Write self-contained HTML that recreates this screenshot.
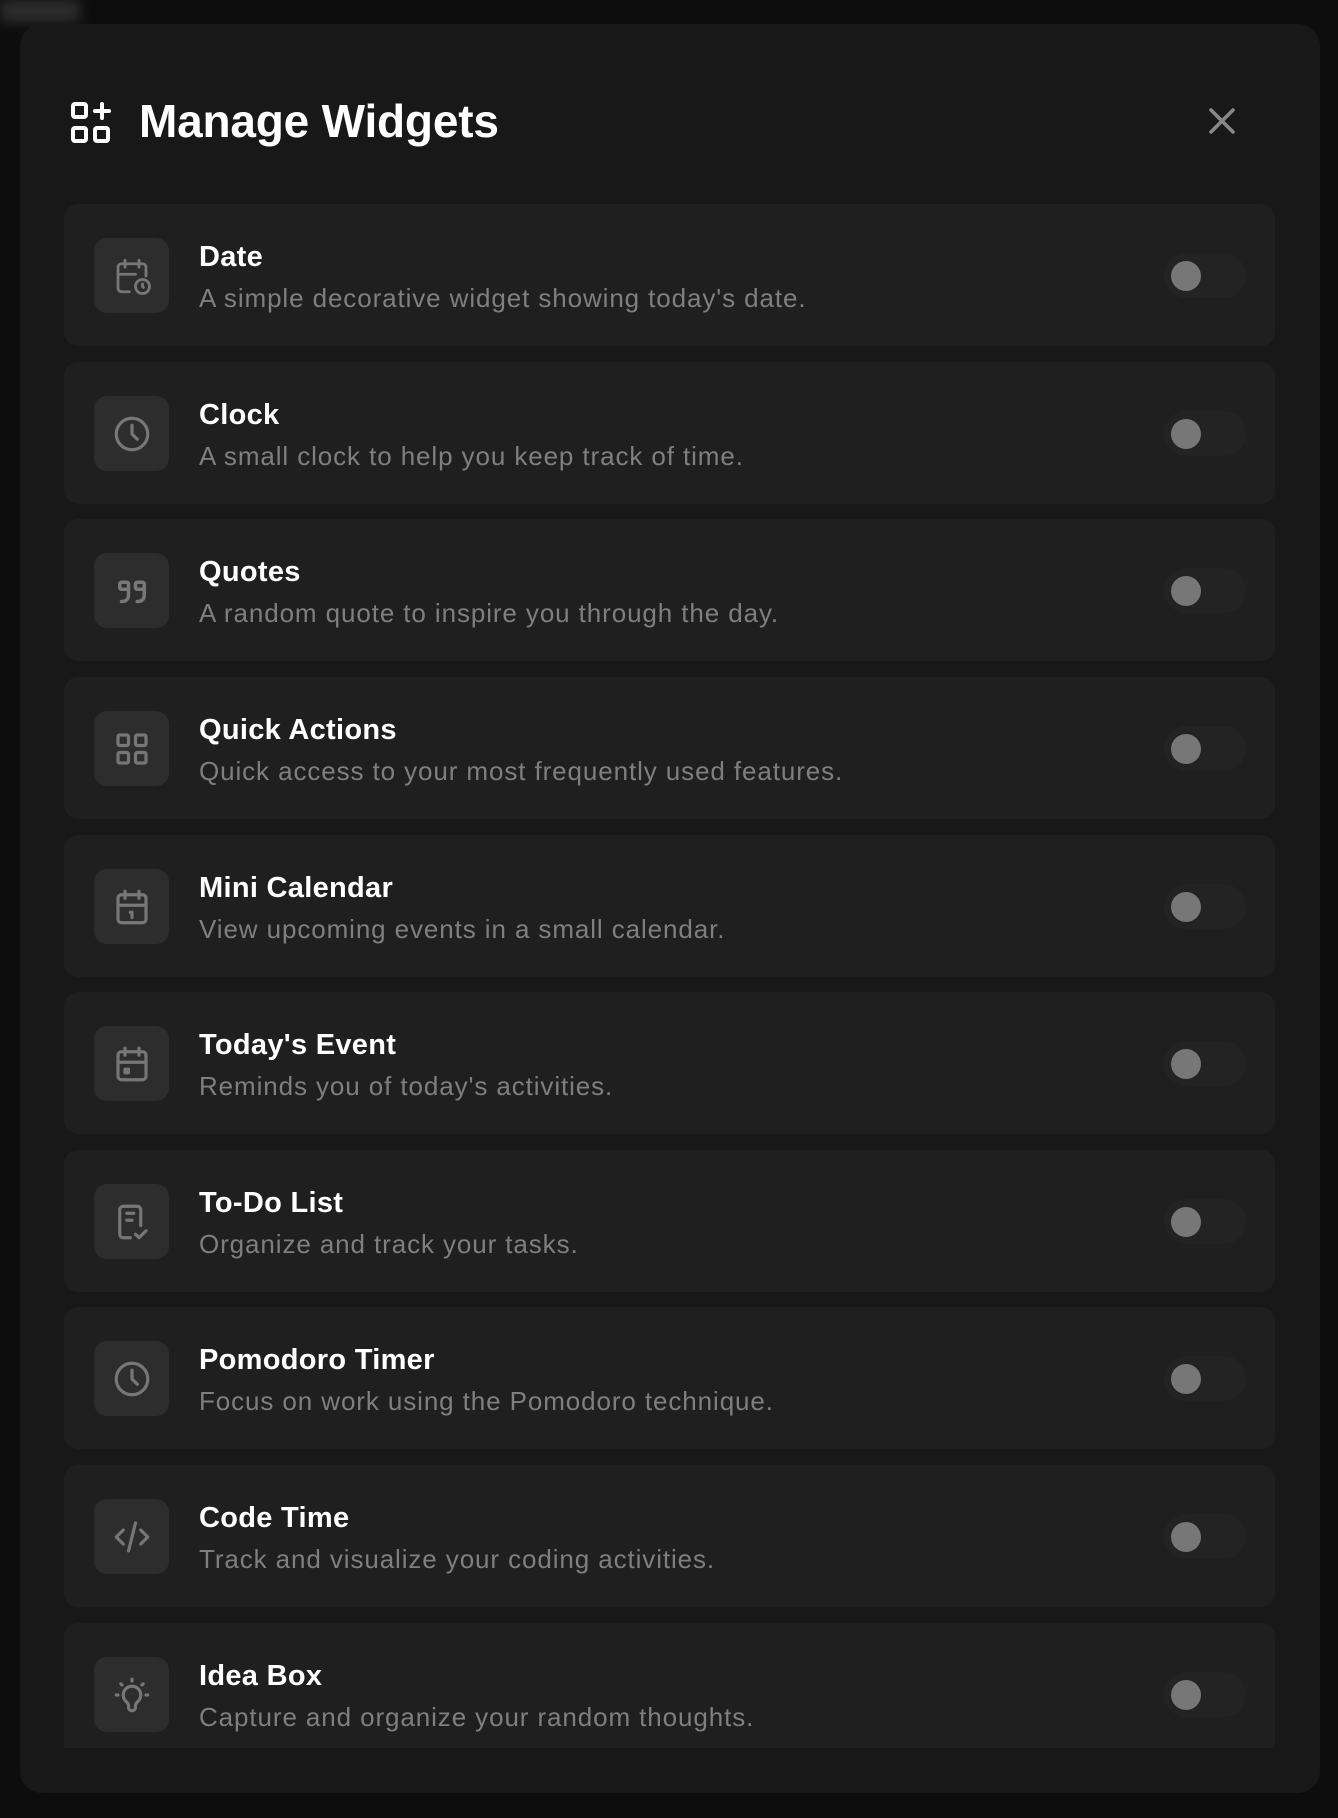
<!DOCTYPE html>
<html><head><meta charset="utf-8"><style>
*{margin:0;padding:0;box-sizing:border-box}
html,body{width:1338px;height:1818px;overflow:hidden;background:#0d0d0d;font-family:"Liberation Sans",sans-serif}
.blur1{position:absolute;left:0;top:0;width:80px;height:22px;background:#3a3a3a;filter:blur(6px);opacity:.7}
.modal{position:absolute;left:20px;top:24px;width:1300px;height:1769px;background:#181818;border-radius:22px;overflow:hidden}
.hicon{position:absolute;left:0;top:0}
.title{position:absolute;left:139px;top:94px;font-size:46px;font-weight:700;color:#fff;letter-spacing:-0.2px;line-height:54px;left:119px;top:70px}
.close{position:absolute;left:1178px;top:73px}
.list{position:absolute;left:44px;top:180px;width:1211px;height:1544px;overflow:hidden}
.row{position:absolute;left:0;width:1211px;height:142px;background:#1f1f1f;border-radius:14px}
.ib{position:absolute;left:30px;top:34px;width:75px;height:75px;background:#2d2d2d;border-radius:13px;display:flex;align-items:center;justify-content:center}
.ib svg{width:42px;height:42px}
.t{position:absolute;left:135px;top:37px;font-size:29px;font-weight:700;color:#fff;letter-spacing:0.3px}
.d{position:absolute;left:135px;top:79px;font-size:26px;color:#7f7f7f;letter-spacing:0.9px}
.tg{position:absolute;left:1100px;top:49px;width:82px;height:45px;border-radius:23px;background:#232323}
.tg::after{content:"";position:absolute;left:7px;top:8px;width:30px;height:30px;border-radius:50%;background:#777}
</style></head><body>
<div class="blur1"></div>
<div class="modal">
<svg class="hicon" width="120" height="160" viewBox="0 0 120 160" fill="none" stroke="#fff" stroke-width="4" stroke-linecap="round" stroke-linejoin="round"><rect x="53" y="80" width="13" height="13" rx="2"/><rect x="53" y="104" width="13" height="13" rx="2"/><rect x="75" y="104" width="13" height="13" rx="2"/><path d="M75 87h14M82 80v14"/></svg>
<div class="title">Manage Widgets</div>
<svg class="close" width="48" height="48" viewBox="0 0 24 24" fill="none" stroke="#888" stroke-width="1.8" stroke-linecap="round"><path d="M6.5 6.5l11 11M17.5 6.5l-11 11"/></svg>
<div class="list">
<div class="row" style="top:0"><div class="ib"><svg viewBox="0 0 24 24" fill="none" stroke="#777" stroke-width="1.6" stroke-linecap="round" stroke-linejoin="round"><path d="M10.5 21H6a2 2 0 0 1-2-2V7a2 2 0 0 1 2-2h12a2 2 0 0 1 2 2v5"/><path d="M16 3v4M8 3v4M4 11h10"/><circle cx="18" cy="18" r="4"/><path d="M18 16.5V18l.5.5"/></svg></div><div class="t">Date</div><div class="d">A simple decorative widget showing today's date.</div><div class="tg"></div></div>
<div class="row" style="top:158px"><div class="ib"><svg viewBox="0 0 24 24" fill="none" stroke="#777" stroke-width="1.8" stroke-linecap="round" stroke-linejoin="round"><circle cx="12" cy="12" r="9"/><path d="M12 7v5l3 3"/></svg></div><div class="t">Clock</div><div class="d">A small clock to help you keep track of time.</div><div class="tg"></div></div>
<div class="row" style="top:315px"><div class="ib"><svg viewBox="0 0 24 24" fill="none" stroke="#777" stroke-width="2" stroke-linecap="round" stroke-linejoin="round"><path d="M10 11H6a1 1 0 0 1-1-1V8a1 1 0 0 1 1-1h3a1 1 0 0 1 1 1v6c0 2.7-1.3 4-4 4"/><path d="M19 11h-4a1 1 0 0 1-1-1V8a1 1 0 0 1 1-1h3a1 1 0 0 1 1 1v6c0 2.7-1.3 4-4 4"/></svg></div><div class="t">Quotes</div><div class="d">A random quote to inspire you through the day.</div><div class="tg"></div></div>
<div class="row" style="top:473px"><div class="ib"><svg viewBox="0 0 24 24" fill="none" stroke="#777" stroke-width="1.8" stroke-linecap="round" stroke-linejoin="round"><rect x="4" y="4" width="6" height="6" rx="1"/><rect x="14" y="4" width="6" height="6" rx="1"/><rect x="4" y="14" width="6" height="6" rx="1"/><rect x="14" y="14" width="6" height="6" rx="1"/></svg></div><div class="t">Quick Actions</div><div class="d">Quick access to your most frequently used features.</div><div class="tg"></div></div>
<div class="row" style="top:631px"><div class="ib"><svg viewBox="0 0 24 24" fill="none" stroke="#777" stroke-width="1.8" stroke-linecap="round" stroke-linejoin="round"><rect x="4" y="5" width="16" height="16" rx="2"/><path d="M16 3v4M8 3v4M4 11h16M11 15h1v3"/></svg></div><div class="t">Mini Calendar</div><div class="d">View upcoming events in a small calendar.</div><div class="tg"></div></div>
<div class="row" style="top:788px"><div class="ib"><svg viewBox="0 0 24 24" fill="none" stroke="#777" stroke-width="1.8" stroke-linecap="round" stroke-linejoin="round"><rect x="4" y="5" width="16" height="16" rx="2"/><path d="M16 3v4M8 3v4M4 11h16"/><rect x="8" y="15" width="2" height="2" fill="#777"/></svg></div><div class="t">Today's Event</div><div class="d">Reminds you of today's activities.</div><div class="tg"></div></div>
<div class="row" style="top:946px"><div class="ib"><svg viewBox="0 0 24 24" fill="none" stroke="#777" stroke-width="1.8" stroke-linecap="round" stroke-linejoin="round"><path d="M11 21H7a2 2 0 0 1-2-2V5a2 2 0 0 1 2-2h8a2 2 0 0 1 2 2v9"/><path d="M9 7h4M9 11h3M14 19l2 2 4-4"/></svg></div><div class="t">To-Do List</div><div class="d">Organize and track your tasks.</div><div class="tg"></div></div>
<div class="row" style="top:1103px"><div class="ib"><svg viewBox="0 0 24 24" fill="none" stroke="#777" stroke-width="1.8" stroke-linecap="round" stroke-linejoin="round"><circle cx="12" cy="12" r="9"/><path d="M12 7v5l3 3"/></svg></div><div class="t">Pomodoro Timer</div><div class="d">Focus on work using the Pomodoro technique.</div><div class="tg"></div></div>
<div class="row" style="top:1261px"><div class="ib"><svg viewBox="0 0 24 24" fill="none" stroke="#777" stroke-width="1.8" stroke-linecap="round" stroke-linejoin="round"><path d="M7 8l-4 4 4 4M17 8l4 4-4 4M14 4l-4 16"/></svg></div><div class="t">Code Time</div><div class="d">Track and visualize your coding activities.</div><div class="tg"></div></div>
<div class="row" style="top:1419px"><div class="ib"><svg viewBox="0 0 24 24" fill="none" stroke="#777" stroke-width="1.8" stroke-linecap="round" stroke-linejoin="round"><path d="M3 12h1M12 3v1M20 12h1M5.6 5.6l.7.7M18.4 5.6l-.7.7"/><path d="M9 16a5 5 0 1 1 6 0 3.5 3.5 0 0 0-1 3 2 2 0 0 1-4 0 3.5 3.5 0 0 0-1-3"/></svg></div><div class="t">Idea Box</div><div class="d">Capture and organize your random thoughts.</div><div class="tg"></div></div>
</div>
</div>
</body></html>
